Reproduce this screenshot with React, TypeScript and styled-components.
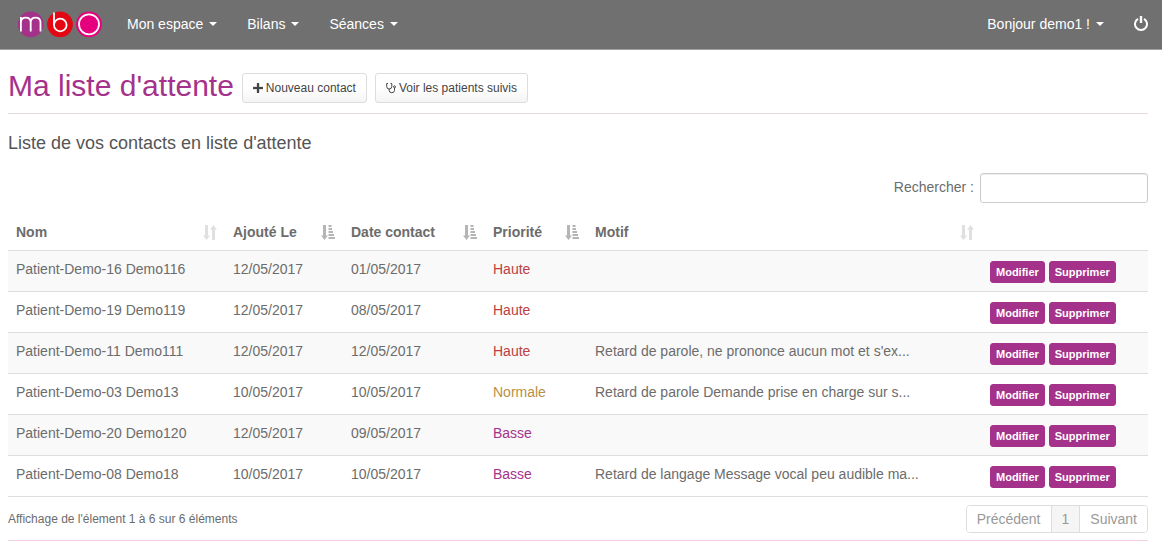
import React from 'react';
import styled, { createGlobalStyle } from 'styled-components';

const GlobalStyle = createGlobalStyle`
  *, *::before, *::after { box-sizing: border-box; }
  body {
    margin: 0;
    background: #fff;
    color: #6c6c6c;
    font-family: "Liberation Sans", Arial, Helvetica, sans-serif;
    font-size: 14px;
    line-height: 20px;
  }
  button, input { font-family: inherit; }
`;

const Navbar = styled.nav`
  display: flex;
  align-items: center;
  min-height: 50px;
  padding: 0 14px 0 18px;
  background: #707070;
  border-bottom: 1px solid #a0a0a0;
`;

const Brand = styled.a`
  display: flex;
  margin-right: 9px;
`;

const NavMenu = styled.div`
  display: flex;
  flex: 1;
`;

const NavButton = styled.button`
  display: flex;
  align-items: center;
  gap: 6px;
  padding: 14px 15px 15px;
  border: 0;
  background: none;
  color: #fff;
  font-size: 14px;
  line-height: 20px;
  cursor: pointer;
`;

const Caret = styled.span`
  border-top: 4px solid #fff;
  border-left: 4px solid transparent;
  border-right: 4px solid transparent;
`;

const PowerLink = styled.a`
  display: flex;
  margin: 0 0 3px 15px;
  color: #fff;
`;

const Page = styled.main`
  padding: 18px 14px 0 8px;
`;

const TitleBar = styled.header`
  display: flex;
  align-items: center;
  gap: 8px;
  padding: 3px 0 8px;
  border-bottom: 1px solid #f0d5e3;
  border-bottom-color: #e4dae0;
`;

const Title = styled.h1`
  margin: 0;
  color: #a5328a;
  font-size: 30px;
  font-weight: 400;
  line-height: 30px;
  padding-bottom: 4px;
`;

const LightButton = styled.button`
  display: flex;
  align-items: center;
  gap: 3px;
  height: 30px;
  padding: 0 10px;
  border: 1px solid #ddd;
  border-radius: 3px;
  background: linear-gradient(#fff 50%, #f4f4f4);
  color: #444;
  font-size: 12px;
  cursor: pointer;
`;

const Subtitle = styled.h2`
  margin: 19px 0 20px;
  color: #555;
  font-size: 18px;
  font-weight: 400;
  line-height: 20px;
`;

const Search = styled.label`
  display: flex;
  justify-content: flex-end;
  gap: 6px;
  line-height: 28px;
`;

const SearchInput = styled.input`
  width: 168px;
  height: 30px;
  padding: 5px 10px;
  border: 1px solid #ccc;
  border-radius: 3px;
  box-shadow: inset 0 1px 1px rgba(0, 0, 0, 0.075);
  font-size: 12px;
`;

const Table = styled.table`
  width: 100%;
  margin: 10px 0 8px;
  table-layout: fixed;
  border-spacing: 0;
  border-bottom: 1px solid #ddd;
`;

const Column = styled.col<{ $width?: number }>`
  width: ${({ $width }) => ($width ? `${$width}px` : 'auto')};
`;

const HeadCell = styled.th`
  padding: 9px 8px 8px;
  text-align: left;
`;

const HeadContent = styled.div`
  display: flex;
  align-items: center;
  justify-content: space-between;
`;

const Row = styled.tr`
  &:nth-child(odd) { background: #f9f9f9; }
`;

const Cell = styled.td`
  height: 41px;
  padding: 8px;
  border-top: 1px solid #ddd;
  vertical-align: top;
  white-space: nowrap;
`;

const priorityColors = { Haute: '#bb4042', Normale: '#b89045', Basse: '#a5328a' };
type Priority = keyof typeof priorityColors;

const PriorityText = styled.span<{ $level: Priority }>`
  color: ${({ $level }) => priorityColors[$level]};
`;

const Actions = styled.div`
  display: flex;
  gap: 4px;
  padding-top: 2px;
`;

const ActionButton = styled.button`
  height: 22px;
  padding: 0 5px;
  border: 1px solid #a5328a;
  border-radius: 3px;
  background: #a5328a;
  color: #fff;
  font-size: 11px;
  font-weight: 700;
  line-height: 18px;
  cursor: pointer;
`;

const TableFooter = styled.footer`
  display: flex;
  justify-content: space-between;
  align-items: center;
  padding-bottom: 7px;
  border-bottom: 1px solid #f9cfe6;
  font-size: 12px;
`;

const Pagination = styled.div`
  display: flex;
  border: 1px solid #ddd;
  border-radius: 4px;
  overflow: hidden;
`;

const PageButton = styled.button<{ $current?: boolean }>`
  height: 26px;
  padding: 0 10px;
  border: 0;
  background: ${({ $current }) => ($current ? '#f5f5f5' : '#fff')};
  color: #999;
  font-size: 14px;
  & + & { border-left: 1px solid #ddd; }
`;

const Logo = () => (
  <svg width="85" height="28" viewBox="0 0 85 28" fill="none" stroke="#fff" strokeWidth="1.8" aria-label="mbo" role="img">
    <circle cx="12.7" cy="13.300" r="12.900" fill="#a5328a" stroke="none" />
    <circle cx="42" cy="13.300" r="12.900" fill="#e30613" stroke="none" />
    <circle cx="71" cy="13.300" r="12.900" fill="#e6007e" stroke="none" />
    <path d="M2.900 20.500V6M2.900 11Q3.200 6.600 7.800 6.600T12.700 11V20.500M12.700 11Q13 6.600 17.600 6.600T22.500 11V20.500" />
    <path d="M36 1.500V14" />
    <circle cx="42.300" cy="14" r="6.300" />
    <circle cx="71" cy="13.300" r="10" />
  </svg>
);

const PlusIcon = () => (
  <svg width="10" height="10" viewBox="0 0 10 10" fill="currentColor" aria-hidden="true">
    <path d="M4.500 0h1q.5 0 .5.5V4h3.500q.5 0 .5.5v1q0 .5-.5.5H6v3.500q0 .5-.5.5h-1q-.5 0-.5-.5V6H.5Q0 6 0 5.500v-1Q0 4 .5 4H4V.5Q4 0 4.500 0z" stroke="currentColor" strokeWidth=".3" />
  </svg>
);

const StethoscopeIcon = () => (
  <svg width="10" height="12" viewBox="0 0 10 12" fill="none" stroke="currentColor" aria-hidden="true">
    <path d="M2 1.500H.700V4.500Q.700 7 3.200 7T5.800 4.500V1.500H4.500M3.200 7V8.500Q3.200 10.700 5.800 10.700T8.500 8.500V6" />
    <circle cx="8.500" cy="4.800" r="1" />
  </svg>
);

const PowerIcon = () => (
  <svg width="14" height="15" viewBox="0 0 14 15" fill="none" stroke="currentColor" strokeWidth="2" aria-hidden="true">
    <path d="M4 2.800A6 6 0 1 0 10 2.800" />
    <path d="M7 0V7" strokeWidth="2.400" />
  </svg>
);

const SortIcon = ({ sorted }: { sorted: boolean }) => (
  <svg width="14" height="15" viewBox="0 0 14 15" fill={sorted ? '#b5b5b5' : '#e0e0e0'} aria-hidden="true">
    <path d="M2 0h3v10.500h2L3.500 15 0 10.500h2z" />
    {sorted ? (
      <path d="M7.500 0h3v2h-3zM7.500 3h3.500v2H7.500zM7.500 6h4.500v2H7.500zM7.500 9h5.500v2H7.500zM7.500 12h6.500v2H7.500z" />
    ) : (
      <path d="M9 15h3V4.500h2L10.500 0 7 4.500h2z" />
    )}
  </svg>
);

const columns = [
  { label: 'Nom', width: 217, sorted: false },
  { label: 'Ajouté Le', width: 118, sorted: true },
  { label: 'Date contact', width: 142, sorted: true },
  { label: 'Priorité', width: 102, sorted: true },
  { label: 'Motif', width: undefined, sorted: false },
];

const contacts: { name: string; added: string; contact: string; priority: Priority; reason: string }[] = [
  { name: 'Patient-Demo-16 Demo116', added: '12/05/2017', contact: '01/05/2017', priority: 'Haute', reason: '' },
  { name: 'Patient-Demo-19 Demo119', added: '12/05/2017', contact: '08/05/2017', priority: 'Haute', reason: '' },
  { name: 'Patient-Demo-11 Demo111', added: '12/05/2017', contact: '12/05/2017', priority: 'Haute', reason: "Retard de parole, ne prononce aucun mot et s'ex..." },
  { name: 'Patient-Demo-03 Demo13', added: '10/05/2017', contact: '10/05/2017', priority: 'Normale', reason: 'Retard de parole Demande prise en charge sur s...' },
  { name: 'Patient-Demo-20 Demo120', added: '12/05/2017', contact: '09/05/2017', priority: 'Basse', reason: '' },
  { name: 'Patient-Demo-08 Demo18', added: '10/05/2017', contact: '10/05/2017', priority: 'Basse', reason: 'Retard de langage Message vocal peu audible ma...' },
];

export default function App() {
  return (
    <>
      <GlobalStyle />
      <Navbar>
        <Brand href="#"><Logo /></Brand>
        <NavMenu>
          {['Mon espace', 'Bilans', 'Séances'].map((label) => (
            <NavButton key={label}>{label}<Caret /></NavButton>
          ))}
        </NavMenu>
        <NavButton>Bonjour demo1 !<Caret /></NavButton>
        <PowerLink href="#" aria-label="Déconnexion"><PowerIcon /></PowerLink>
      </Navbar>
      <Page>
        <TitleBar>
          <Title>Ma liste d'attente</Title>
          <LightButton><PlusIcon />Nouveau contact</LightButton>
          <LightButton><StethoscopeIcon />Voir les patients suivis</LightButton>
        </TitleBar>
        <Subtitle>Liste de vos contacts en liste d'attente</Subtitle>
        <Search>
          Rechercher :
          <SearchInput type="search" />
        </Search>
        <Table>
          <colgroup>
            {columns.map((column) => <Column key={column.label} $width={column.width} />)}
            <Column $width={166} />
          </colgroup>
          <thead>
            <tr>
              {columns.map((column) => (
                <HeadCell key={column.label} scope="col">
                  <HeadContent>{column.label}<SortIcon sorted={column.sorted} /></HeadContent>
                </HeadCell>
              ))}
              <HeadCell />
            </tr>
          </thead>
          <tbody>
            {contacts.map((row) => (
              <Row key={row.name}>
                <Cell>{row.name}</Cell>
                <Cell>{row.added}</Cell>
                <Cell>{row.contact}</Cell>
                <Cell><PriorityText $level={row.priority}>{row.priority}</PriorityText></Cell>
                <Cell>{row.reason}</Cell>
                <Cell>
                  <Actions>
                    <ActionButton>Modifier</ActionButton>
                    <ActionButton>Supprimer</ActionButton>
                  </Actions>
                </Cell>
              </Row>
            ))}
          </tbody>
        </Table>
        <TableFooter>
          <span>Affichage de l'élement 1 à 6 sur 6 éléments</span>
          <Pagination>
            <PageButton>Précédent</PageButton>
            <PageButton $current>1</PageButton>
            <PageButton>Suivant</PageButton>
          </Pagination>
        </TableFooter>
      </Page>
    </>
  );
}
